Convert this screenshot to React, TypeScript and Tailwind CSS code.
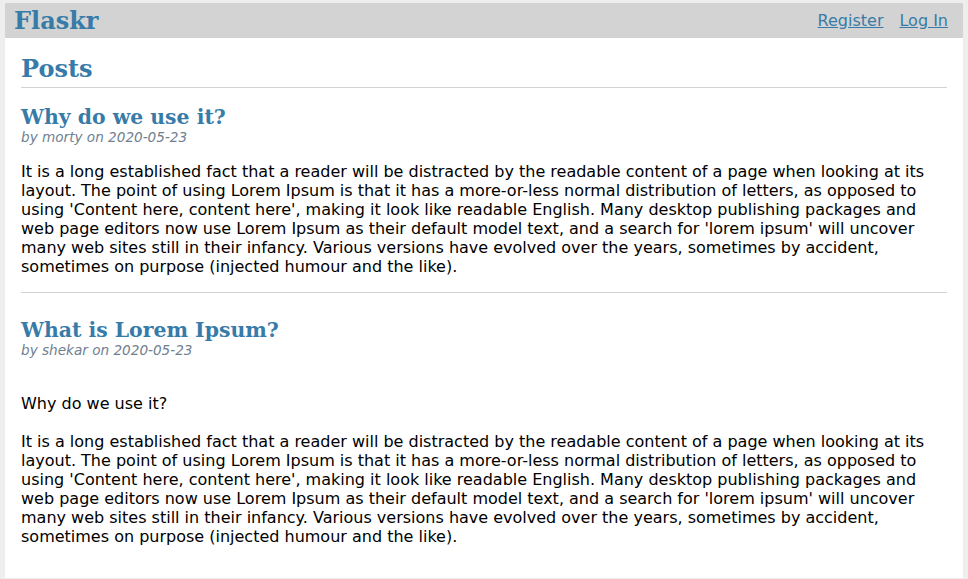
const posts = [
  {
    id: 1,
    title: 'Why do we use it?',
    author: 'morty',
    created: '2020-05-23',
    body: "It is a long established fact that a reader will be distracted by the readable content of a page when looking at its layout. The point of using Lorem Ipsum is that it has a more-or-less normal distribution of letters, as opposed to using 'Content here, content here', making it look like readable English. Many desktop publishing packages and web page editors now use Lorem Ipsum as their default model text, and a search for 'lorem ipsum' will uncover many web sites still in their infancy. Various versions have evolved over the years, sometimes by accident, sometimes on purpose (injected humour and the like).",
  },
  {
    id: 2,
    title: 'What is Lorem Ipsum?',
    author: 'shekar',
    created: '2020-05-23',
    body: "\nWhy do we use it?\n\nIt is a long established fact that a reader will be distracted by the readable content of a page when looking at its layout. The point of using Lorem Ipsum is that it has a more-or-less normal distribution of letters, as opposed to using 'Content here, content here', making it look like readable English. Many desktop publishing packages and web page editors now use Lorem Ipsum as their default model text, and a search for 'lorem ipsum' will uncover many web sites still in their infancy. Various versions have evolved over the years, sometimes by accident, sometimes on purpose (injected humour and the like).",
  },
];

export default function App() {
  return (
    <div className="min-h-screen bg-[#eeeeee] px-[5px] pt-[3px] font-['DejaVu_Sans',sans-serif] text-[16px] leading-[normal] text-black">
      <div className="bg-white min-h-[574px]">
        <nav className="flex items-center h-[35px] bg-[#d3d3d3] pl-[9px] pr-[7px]">
          <h1 className="flex-auto m-0 font-['DejaVu_Serif',serif] font-bold text-[24px] leading-none text-[#377ba8]">
            <a href="#" className="no-underline">Flaskr</a>
          </h1>
          <ul className="flex list-none m-0 p-0">
            <li><a href="#" className="block p-2 underline text-[#377ba8]">Register</a></li>
            <li><a href="#" className="block p-2 underline text-[#377ba8]">Log In</a></li>
          </ul>
        </nav>

        <section className="px-4 pb-4">
          <header className="flex items-end border-b border-[#d3d3d3]">
            <h1 className="flex-auto mt-4 mb-1 font-['DejaVu_Serif',serif] font-bold text-[24px] leading-[normal] text-[#377ba8]">
              Posts
            </h1>
          </header>

          {posts.map((post, i) => (
            <article key={post.id}>
              {i > 0 && <hr className="border-0 border-t border-[#d3d3d3] mt-[2px]" />}
              <header className={`flex items-end ${i > 0 ? 'mt-[25px]' : 'mt-[17px]'}`}>
                <div className="flex-auto">
                  <h1 className="m-0 font-['DejaVu_Serif',serif] font-bold text-[20.4px] leading-[normal] text-[#377ba8]">
                    {post.title}
                  </h1>
                  <div className="text-[13.6px] leading-[normal] italic text-[#708090]">
                    by {post.author} on {post.created}
                  </div>
                </div>
              </header>
              <p className="whitespace-pre-line leading-[normal] mt-[17px] mb-4">{post.body}</p>
            </article>
          ))}
        </section>
      </div>
    </div>
  );
}
